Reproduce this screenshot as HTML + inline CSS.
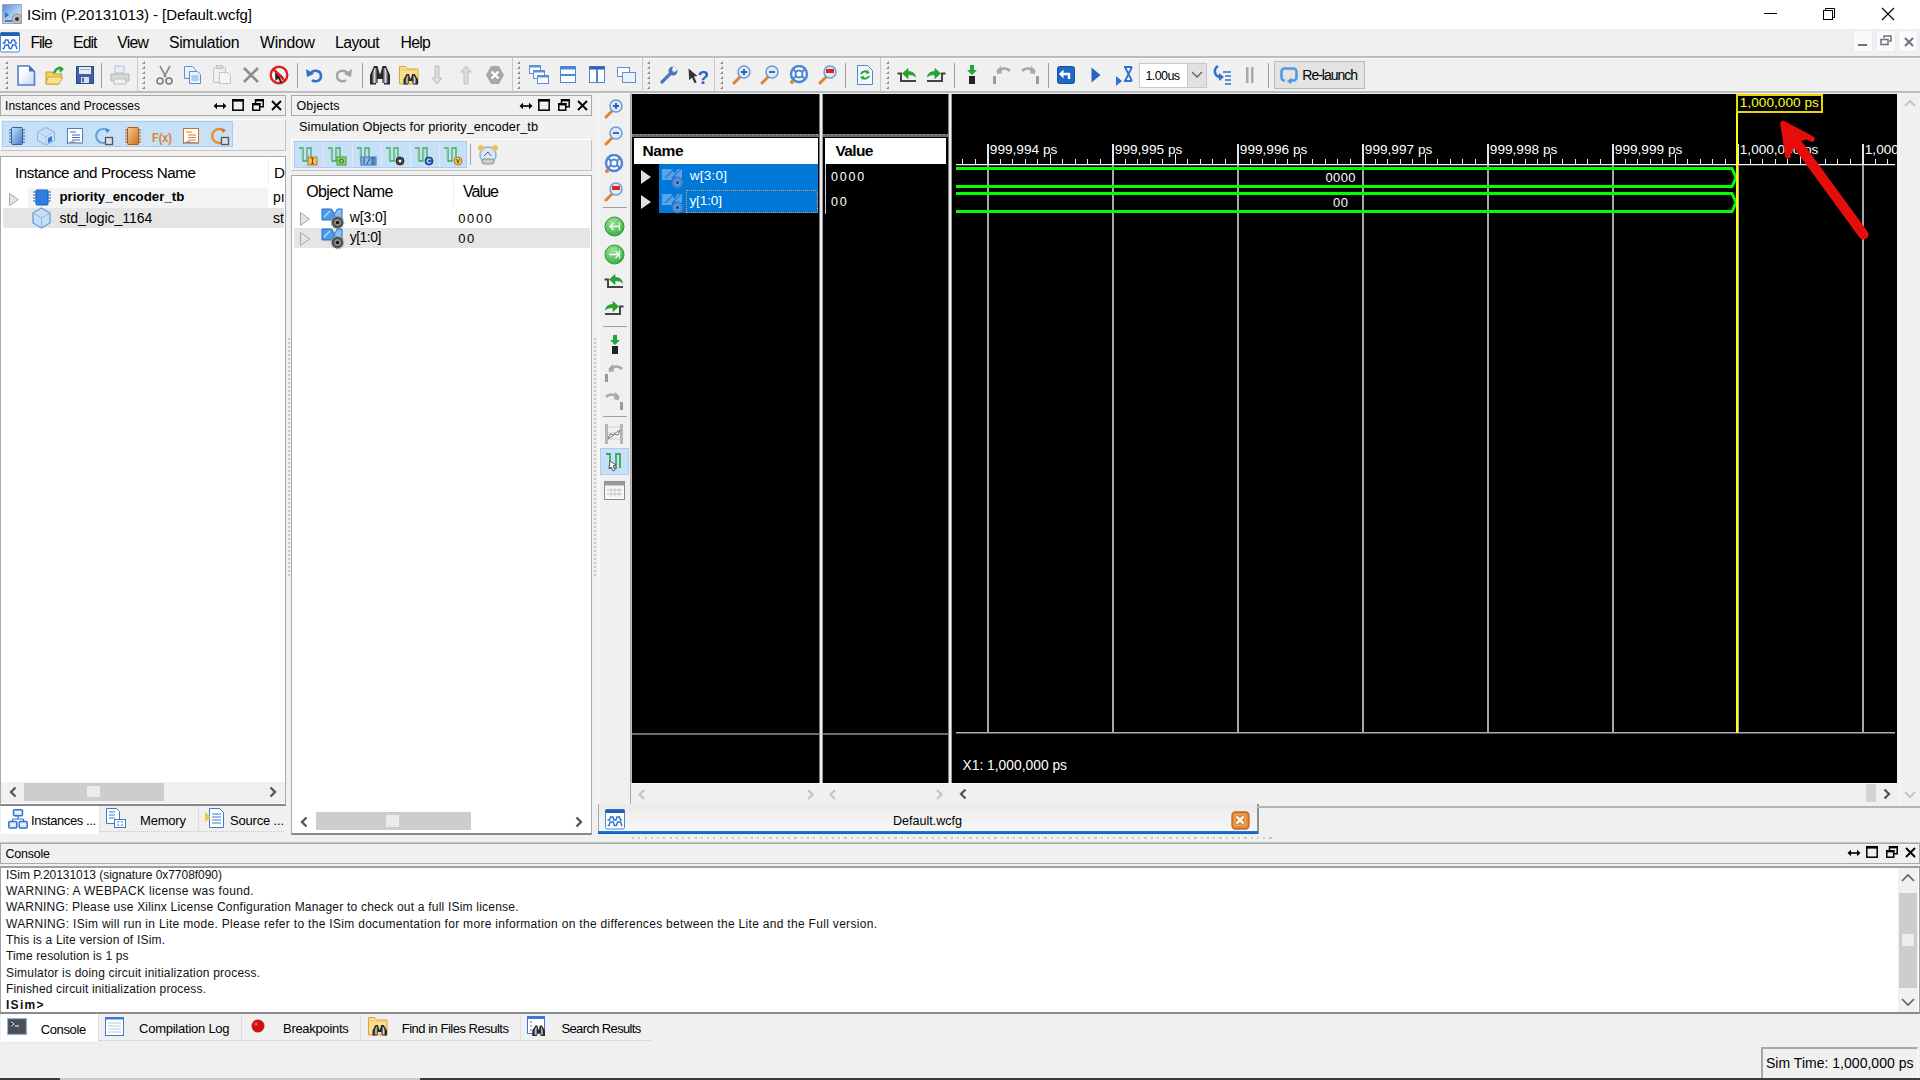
<!DOCTYPE html><html><head><meta charset="utf-8"><style>
*{margin:0;padding:0;box-sizing:border-box}
html,body{width:1920px;height:1080px;overflow:hidden;background:#f0f0f0}
body{position:relative;font-family:"Liberation Sans",sans-serif;color:#000}
.a{position:absolute}
.t{white-space:nowrap;line-height:1}
</style></head><body><div class="a" style="left:0px;top:0px;width:1920px;height:29px;background:#fff"></div>
<svg class="a" style="left:2px;top:4px;" width="20" height="20" viewBox="0 0 20 20"><defs><linearGradient id="tg" x1="0" y1="0" x2="1" y2="1"><stop offset="0" stop-color="#4f8ad6"/><stop offset=".6" stop-color="#b9d4f0"/><stop offset="1" stop-color="#e6eef6"/></linearGradient></defs><rect x="0.5" y="0.5" width="19" height="19" fill="url(#tg)" stroke="#9aa8b8"/><path d="M3 8l4 3-4 3z" fill="#2f6fd0"/><path d="M3 17h8" stroke="#2f5fb0" stroke-width="1.5"/><circle cx="15" cy="15" r="5" fill="#b8bcc2" stroke="#8a9098"/><circle cx="15" cy="15" r="2" fill="#333"/></svg>
<div class="a t" style="left:27px;top:7px;font-size:15px;color:#000;letter-spacing:-0.071px;">ISim (P.20131013) - [Default.wcfg]</div>
<div class="a" style="left:1764px;top:13px;width:13px;height:1px;background:#000"></div>
<svg class="a" style="left:1822px;top:7px;" width="15" height="14" viewBox="0 0 15 14"><rect x="1.5" y="3.5" width="9" height="9" fill="#fff" stroke="#000"/><path d="M3.5 3.5V1.5h9v9h-2" fill="none" stroke="#000"/></svg>
<svg class="a" style="left:1881px;top:7px;" width="15" height="15" viewBox="0 0 15 15"><path d="M1 1L13 13M13 1L1 13" stroke="#000" stroke-width="1.1"/></svg>
<div class="a" style="left:0px;top:29px;width:1920px;height:27px;background:#f0f0f0"></div>
<svg class="a" style="left:0px;top:32px;" width="21" height="21" viewBox="0 0 21 21"><rect x="0.5" y="0.5" width="19" height="19.5" rx="1.5" fill="#fff" stroke="#4f86d0"/><rect x="0.5" y="0.5" width="19" height="3.5" fill="#1f5fb8"/><path d="M2.5 11h2l1-3h2.5l1 3h2l1-3h2.5l1 3h1.5" fill="none" stroke="#2f6fd0" stroke-width="1.4"/><path d="M2.5 16.5h1.5l1.2-3.5h3l1.2 3.5h2l1.2-3.5h3l1.2 3.5h.7" fill="none" stroke="#2f6fd0" stroke-width="1.4"/></svg>
<div class="a t" style="left:30.5px;top:35.4px;font-size:15.8px;letter-spacing:-1.090px;">File</div>
<div class="a t" style="left:73px;top:35.4px;font-size:15.8px;letter-spacing:-0.911px;">Edit</div>
<div class="a t" style="left:117.3px;top:35.4px;font-size:15.8px;letter-spacing:-0.756px;">View</div>
<div class="a t" style="left:169px;top:35.4px;font-size:15.8px;letter-spacing:-0.352px;">Simulation</div>
<div class="a t" style="left:260px;top:35.4px;font-size:15.8px;letter-spacing:-0.237px;">Window</div>
<div class="a t" style="left:335px;top:35.4px;font-size:15.8px;letter-spacing:-0.547px;">Layout</div>
<div class="a t" style="left:400.5px;top:35.4px;font-size:15.8px;letter-spacing:-0.733px;">Help</div>
<div class="a" style="left:1853px;top:30px;width:20px;height:22px;background:#fafafa;border:1px solid #ececec"></div>
<div class="a" style="left:1876px;top:30px;width:20px;height:22px;background:#fafafa;border:1px solid #ececec"></div>
<div class="a" style="left:1898px;top:30px;width:20px;height:22px;background:#fafafa;border:1px solid #ececec"></div>
<div class="a" style="left:1858px;top:44px;width:9px;height:2px;background:#6b7280"></div>
<svg class="a" style="left:1880px;top:35px;" width="14" height="12" viewBox="0 0 14 12"><rect x="1" y="4.5" width="7" height="5" fill="none" stroke="#6b7280" stroke-width="1.5"/><path d="M4 3V1h7v5H9" fill="none" stroke="#6b7280" stroke-width="1.5"/></svg>
<svg class="a" style="left:1903px;top:36px;" width="12" height="12" viewBox="0 0 12 12"><path d="M2 2L10 10M10 2L2 10" stroke="#6b7280" stroke-width="2"/></svg>
<div class="a" style="left:0px;top:56px;width:1920px;height:2px;background:#bdbdbd"></div>
<div class="a" style="left:0px;top:58px;width:1920px;height:1px;background:#fbfbfb"></div>
<div class="a" style="left:0px;top:59px;width:1920px;height:33px;background:#f0f0f0"></div>
<div class="a" style="left:0px;top:91px;width:1920px;height:2px;background:#bdbdbd"></div>
<div class="a" style="left:137px;top:58px;width:1px;height:33px;background:#c8c8c8"></div>
<div class="a" style="left:512px;top:58px;width:1px;height:33px;background:#c8c8c8"></div>
<div class="a" style="left:642px;top:58px;width:1px;height:33px;background:#c8c8c8"></div>
<div class="a" style="left:714px;top:58px;width:1px;height:33px;background:#c8c8c8"></div>
<div class="a" style="left:880px;top:58px;width:1px;height:33px;background:#c8c8c8"></div>
<svg class="a" style="left:5px;top:61px;" width="4" height="30" viewBox="0 0 4 30"><path d="M0 0.5h1v1H0z" fill="#fff"/><path d="M3 0v3H0z" fill="#8c8c8c"/><path d="M0 5.5h1v1H0z" fill="#fff"/><path d="M3 5v3H0z" fill="#8c8c8c"/><path d="M0 10.5h1v1H0z" fill="#fff"/><path d="M3 10v3H0z" fill="#8c8c8c"/><path d="M0 15.5h1v1H0z" fill="#fff"/><path d="M3 15v3H0z" fill="#8c8c8c"/><path d="M0 20.5h1v1H0z" fill="#fff"/><path d="M3 20v3H0z" fill="#8c8c8c"/><path d="M0 25.5h1v1H0z" fill="#fff"/><path d="M3 25v3H0z" fill="#8c8c8c"/></svg>
<svg class="a" style="left:142px;top:61px;" width="4" height="30" viewBox="0 0 4 30"><path d="M0 0.5h1v1H0z" fill="#fff"/><path d="M3 0v3H0z" fill="#8c8c8c"/><path d="M0 5.5h1v1H0z" fill="#fff"/><path d="M3 5v3H0z" fill="#8c8c8c"/><path d="M0 10.5h1v1H0z" fill="#fff"/><path d="M3 10v3H0z" fill="#8c8c8c"/><path d="M0 15.5h1v1H0z" fill="#fff"/><path d="M3 15v3H0z" fill="#8c8c8c"/><path d="M0 20.5h1v1H0z" fill="#fff"/><path d="M3 20v3H0z" fill="#8c8c8c"/><path d="M0 25.5h1v1H0z" fill="#fff"/><path d="M3 25v3H0z" fill="#8c8c8c"/></svg>
<svg class="a" style="left:517px;top:61px;" width="4" height="30" viewBox="0 0 4 30"><path d="M0 0.5h1v1H0z" fill="#fff"/><path d="M3 0v3H0z" fill="#8c8c8c"/><path d="M0 5.5h1v1H0z" fill="#fff"/><path d="M3 5v3H0z" fill="#8c8c8c"/><path d="M0 10.5h1v1H0z" fill="#fff"/><path d="M3 10v3H0z" fill="#8c8c8c"/><path d="M0 15.5h1v1H0z" fill="#fff"/><path d="M3 15v3H0z" fill="#8c8c8c"/><path d="M0 20.5h1v1H0z" fill="#fff"/><path d="M3 20v3H0z" fill="#8c8c8c"/><path d="M0 25.5h1v1H0z" fill="#fff"/><path d="M3 25v3H0z" fill="#8c8c8c"/></svg>
<svg class="a" style="left:647px;top:61px;" width="4" height="30" viewBox="0 0 4 30"><path d="M0 0.5h1v1H0z" fill="#fff"/><path d="M3 0v3H0z" fill="#8c8c8c"/><path d="M0 5.5h1v1H0z" fill="#fff"/><path d="M3 5v3H0z" fill="#8c8c8c"/><path d="M0 10.5h1v1H0z" fill="#fff"/><path d="M3 10v3H0z" fill="#8c8c8c"/><path d="M0 15.5h1v1H0z" fill="#fff"/><path d="M3 15v3H0z" fill="#8c8c8c"/><path d="M0 20.5h1v1H0z" fill="#fff"/><path d="M3 20v3H0z" fill="#8c8c8c"/><path d="M0 25.5h1v1H0z" fill="#fff"/><path d="M3 25v3H0z" fill="#8c8c8c"/></svg>
<svg class="a" style="left:720px;top:61px;" width="4" height="30" viewBox="0 0 4 30"><path d="M0 0.5h1v1H0z" fill="#fff"/><path d="M3 0v3H0z" fill="#8c8c8c"/><path d="M0 5.5h1v1H0z" fill="#fff"/><path d="M3 5v3H0z" fill="#8c8c8c"/><path d="M0 10.5h1v1H0z" fill="#fff"/><path d="M3 10v3H0z" fill="#8c8c8c"/><path d="M0 15.5h1v1H0z" fill="#fff"/><path d="M3 15v3H0z" fill="#8c8c8c"/><path d="M0 20.5h1v1H0z" fill="#fff"/><path d="M3 20v3H0z" fill="#8c8c8c"/><path d="M0 25.5h1v1H0z" fill="#fff"/><path d="M3 25v3H0z" fill="#8c8c8c"/></svg>
<svg class="a" style="left:886px;top:61px;" width="4" height="30" viewBox="0 0 4 30"><path d="M0 0.5h1v1H0z" fill="#fff"/><path d="M3 0v3H0z" fill="#8c8c8c"/><path d="M0 5.5h1v1H0z" fill="#fff"/><path d="M3 5v3H0z" fill="#8c8c8c"/><path d="M0 10.5h1v1H0z" fill="#fff"/><path d="M3 10v3H0z" fill="#8c8c8c"/><path d="M0 15.5h1v1H0z" fill="#fff"/><path d="M3 15v3H0z" fill="#8c8c8c"/><path d="M0 20.5h1v1H0z" fill="#fff"/><path d="M3 20v3H0z" fill="#8c8c8c"/><path d="M0 25.5h1v1H0z" fill="#fff"/><path d="M3 25v3H0z" fill="#8c8c8c"/></svg>
<div class="a" style="left:101px;top:63px;width:1px;height:25px;background:#a0a0a0"></div>
<div class="a" style="left:297px;top:63px;width:1px;height:25px;background:#a0a0a0"></div>
<div class="a" style="left:362px;top:63px;width:1px;height:25px;background:#a0a0a0"></div>
<div class="a" style="left:845px;top:63px;width:1px;height:25px;background:#a0a0a0"></div>
<div class="a" style="left:954px;top:63px;width:1px;height:25px;background:#a0a0a0"></div>
<div class="a" style="left:1048px;top:63px;width:1px;height:25px;background:#a0a0a0"></div>
<div class="a" style="left:1268px;top:63px;width:1px;height:25px;background:#a0a0a0"></div>
<svg class="a" style="left:17px;top:65px;" width="20" height="21" viewBox="0 0 20 21"><defs><linearGradient id="gnew" x1="0" y1="0" x2="1" y2="1"><stop offset=".3" stop-color="#fff"/><stop offset="1" stop-color="#b9d6f2"/></linearGradient></defs><path d="M1 1h11l5.5 5.5V20H1z" fill="url(#gnew)" stroke="#4f7fc4" stroke-width="1.6"/><path d="M12 1v5.5h5.5z" fill="#3a6fc4"/></svg>
<svg class="a" style="left:45px;top:65px;" width="20" height="21" viewBox="0 0 20 21"><path d="M1 7h6l2 2h8l-3 10H1z" fill="#f3d25c" stroke="#c99a2e"/><path d="M3 12h15l-4 7H1z" fill="#fbe58b" stroke="#c99a2e" stroke-width=".8"/><path d="M9 8c2-5 6-6 8-4" fill="none" stroke="#22a63a" stroke-width="2.5"/><path d="M14 1l5 3-4 4z" fill="#22a63a"/></svg>
<svg class="a" style="left:75px;top:65px;" width="20" height="21" viewBox="0 0 20 21"><rect x="1.5" y="1.5" width="17" height="17" fill="#3f5fa6" stroke="#2c4a8a"/><rect x="4" y="2" width="12" height="7" fill="#e8edf5"/><rect x="5" y="4" width="10" height="1" fill="#9aa9c4"/><rect x="6" y="12" width="8" height="6" fill="#d7dee9"/><rect x="7" y="13" width="2" height="4" fill="#3f5fa6"/></svg>
<svg class="a" style="left:110px;top:65px;" width="20" height="21" viewBox="0 0 20 21"><rect x="5" y="1" width="9" height="7" fill="#e6eef8" stroke="#b7c2cf"/><path d="M1 9h18v7H1z" fill="#d8d8d8" stroke="#b5b5b5"/><rect x="4" y="14" width="12" height="5" fill="#f2f2f2" stroke="#bdbdbd"/></svg>
<svg class="a" style="left:155px;top:65px;" width="20" height="21" viewBox="0 0 20 21"><path d="M5 1l6 11M15 1L9 12" stroke="#8a8a8a" stroke-width="1.6" fill="none"/><circle cx="5" cy="16" r="3" fill="none" stroke="#7a7a7a" stroke-width="1.6"/><circle cx="14" cy="16" r="3" fill="none" stroke="#7a7a7a" stroke-width="1.6"/></svg>
<svg class="a" style="left:183px;top:65px;" width="20" height="21" viewBox="0 0 20 21"><path d="M1.5 1.5h8l3 3v9h-11z" fill="#eaf2fc" stroke="#5b8fd8"/><path d="M6.5 6.5h8l3 3v9h-11z" fill="#eaf2fc" stroke="#5b8fd8"/><path d="M8.5 11h7M8.5 13h7M8.5 15h7" stroke="#7aa6e0"/></svg>
<svg class="a" style="left:212px;top:65px;" width="20" height="21" viewBox="0 0 20 21"><rect x="1.5" y="2.5" width="12" height="15" rx="1" fill="#efefef" stroke="#c4c4c4"/><rect x="4.5" y="0.5" width="6" height="3" fill="#ddd" stroke="#c4c4c4"/><path d="M7.5 7.5h8l3 3v8h-11z" fill="#f5f5f5" stroke="#c4c4c4"/></svg>
<svg class="a" style="left:241px;top:65px;" width="20" height="21" viewBox="0 0 20 21"><path d="M3 3L17 17M17 3L3 17" stroke="#8c8c8c" stroke-width="2.6"/></svg>
<svg class="a" style="left:269px;top:65px;" width="20" height="21" viewBox="0 0 20 21"><circle cx="10" cy="10" r="8.3" fill="#f4f4f4" stroke="#e0201b" stroke-width="2.4"/><path d="M6 4.5L15 12.5L11 12.8L13 17L11.2 17.8L9.2 13.6L6.5 16Z" fill="#1a1a1a"/><path d="M4.2 4.2L15.8 15.8" stroke="#e0201b" stroke-width="2.4"/></svg>
<svg class="a" style="left:305px;top:65px;" width="20" height="21" viewBox="0 0 20 21"><path d="M5 9c3-5 11-4 11 2s-7 6-9 4" fill="none" stroke="#2c74d0" stroke-width="2.6"/><path d="M1 4l1 8 7-3z" fill="#2c74d0"/></svg>
<svg class="a" style="left:333px;top:65px;" width="20" height="21" viewBox="0 0 20 21"><path d="M15 9c-3-5-11-4-11 2s7 6 9 4" fill="none" stroke="#a3a3a3" stroke-width="2.4" transform="translate(0,0)"/><path d="M19 4l-1 8-7-3z" fill="#a3a3a3"/></svg>
<svg class="a" style="left:370px;top:65px;" width="20" height="21" viewBox="0 0 20 21"><defs><linearGradient id="gbn" x1="0" y1="0" x2="1" y2="0"><stop offset="0" stop-color="#1e1e1e"/><stop offset=".5" stop-color="#d8d8d8"/><stop offset="1" stop-color="#1e1e1e"/></linearGradient></defs><path d="M4 1H7.5L9.5 8.5H10.5L12.5 1H16L20 10V19.5H14V14H6V19.5H0V10Z" fill="#2a2a2a"/><path d="M1.5 10.5L4.5 3H6.5L7.5 10.5V18H1.5Z" fill="url(#gbn)"/><path d="M12.5 10.5L13.5 3H15.5L18.5 10.5V18H12.5Z" fill="url(#gbn)"/></svg>
<svg class="a" style="left:399px;top:65px;" width="20" height="21" viewBox="0 0 20 21"><path d="M0.5 1.5h6l2 2.5h10.5v15H0.5z" fill="#f8e08a" stroke="#e0a040"/><path d="M2 5h15" stroke="#f0c060"/><path d="M7.5 9H10L11.2 13.5H12L13.2 9H15.7L19 14.5V19.5H14.2V16H9V19.5H4.5V14.5Z" fill="#2a2a2a"/><path d="M6 15L8.4 10.5H9.5L10 18.5H6Z" fill="url(#gbn)"/><path d="M13.5 10.5H14.8L17.7 15V18.5H13.4Z" fill="url(#gbn)"/></svg>
<svg class="a" style="left:431px;top:65px;" width="20" height="21" viewBox="0 0 20 21"><path d="M4 1v12H1l5 6 5-6H8V1z" fill="#dcdcdc" stroke="#bdbdbd"/></svg>
<svg class="a" style="left:460px;top:65px;" width="20" height="21" viewBox="0 0 20 21"><path d="M4 19V7H1l5-6 5 6H8v12z" fill="#dcdcdc" stroke="#bdbdbd"/></svg>
<svg class="a" style="left:485px;top:65px;" width="20" height="21" viewBox="0 0 20 21"><path d="M6 1h8l5 9-5 9H6l-5-9z" fill="#a8a8a8"/><path d="M6.5 6.5l7 7M13.5 6.5l-7 7" stroke="#fff" stroke-width="2.4"/></svg>
<svg class="a" style="left:529px;top:65px;" width="20" height="21" viewBox="0 0 20 21"><rect x="0.5" y="0.5" width="11" height="8" fill="#fff" stroke="#5b8fd8"/><rect x="0.5" y="0.5" width="11" height="2" fill="#5b8fd8"/><rect x="4.5" y="5.5" width="11" height="8" fill="#fff" stroke="#5b8fd8"/><rect x="4.5" y="5.5" width="11" height="2" fill="#5b8fd8"/><rect x="8.5" y="10.5" width="11" height="8" fill="#fff" stroke="#5b8fd8"/><rect x="8.5" y="10.5" width="11" height="2" fill="#5b8fd8"/></svg>
<svg class="a" style="left:560px;top:65px;" width="20" height="21" viewBox="0 0 20 21"><rect x="0.5" y="1.5" width="15" height="16" fill="#fff" stroke="#4f86d4"/><rect x="0.5" y="1.5" width="15" height="3" fill="#4f86d4"/><rect x="0.5" y="9" width="15" height="2" fill="#4f86d4"/></svg>
<svg class="a" style="left:589px;top:65px;" width="20" height="21" viewBox="0 0 20 21"><rect x="0.5" y="1.5" width="15" height="16" fill="#fff" stroke="#4f86d4"/><rect x="0.5" y="1.5" width="15" height="3" fill="#2f5fb0"/><rect x="7" y="4" width="2" height="13" fill="#4f86d4"/></svg>
<svg class="a" style="left:617px;top:65px;" width="20" height="21" viewBox="0 0 20 21"><rect x="0.5" y="2.5" width="12" height="9" fill="#fff" stroke="#5b8fd8"/><rect x="5.5" y="7.5" width="13" height="10" fill="#eaf2fc" stroke="#5b8fd8"/></svg>
<svg class="a" style="left:660px;top:65px;" width="20" height="21" viewBox="0 0 20 21"><path d="M2 17l9-9" stroke="#4b78b8" stroke-width="3.2" stroke-linecap="round"/><circle cx="13" cy="6" r="4.5" fill="#4b78b8"/><path d="M13 1l5 3-3 3-3-1z" fill="#f0f0f0"/></svg>
<svg class="a" style="left:688px;top:65px;" width="20" height="21" viewBox="0 0 20 21"><path d="M0.5 1.5L9.5 9L6 9.6L8.6 15.2L6.6 16.2L4 10.6L1.2 13.2Z" fill="#333" transform="translate(0,2)"/><text x="9.5" y="18.5" font-family="Liberation Sans" font-weight="bold" font-size="19" fill="#2466c4">?</text></svg>
<svg class="a" style="left:732px;top:65px;" width="20" height="21" viewBox="0 0 20 21"><path d="M2 18l6-6" stroke="#e0822e" stroke-width="3" stroke-linecap="round"/><circle cx="12" cy="7" r="6" fill="#dceaf8" stroke="#6a9bd6" stroke-width="1.5"/><path d="M9 7h6M12 4v6" stroke="#2c5fb0" stroke-width="1.8"/></svg>
<svg class="a" style="left:760px;top:65px;" width="20" height="21" viewBox="0 0 20 21"><path d="M2 18l6-6" stroke="#e0822e" stroke-width="3" stroke-linecap="round"/><circle cx="12" cy="7" r="6" fill="#dceaf8" stroke="#6a9bd6" stroke-width="1.5"/><path d="M9 7h6" stroke="#2c5fb0" stroke-width="1.8"/></svg>
<svg class="a" style="left:789px;top:65px;" width="20" height="21" viewBox="0 0 20 21"><circle cx="10" cy="9" r="8" fill="#fff" stroke="#4f86d4" stroke-width="2.5"/><circle cx="10" cy="9" r="3.5" fill="#fff" stroke="#4f86d4" stroke-width="2"/><path d="M4 4l3 3M16 4l-3 3M4 14l3-3M16 14l-3-3" stroke="#4f86d4" stroke-width="2"/><circle cx="3" cy="17" r="2" fill="#e0822e"/></svg>
<svg class="a" style="left:818px;top:65px;" width="20" height="21" viewBox="0 0 20 21"><path d="M2 18l6-6" stroke="#e0822e" stroke-width="3" stroke-linecap="round"/><circle cx="12" cy="7" r="6" fill="#dceaf8" stroke="#6a9bd6" stroke-width="1.5"/><rect x="8" y="4" width="8" height="4" fill="#e0201b"/></svg>
<svg class="a" style="left:855px;top:65px;" width="20" height="21" viewBox="0 0 20 21"><path d="M2.5 0.5h10l5 5v14h-15z" fill="#f4f8fd" stroke="#4f86d4"/><path d="M6 9a4 4 0 0 1 7-1M14 11a4 4 0 0 1-7 1" fill="none" stroke="#22a63a" stroke-width="2"/><path d="M12 5l3 3-4 1zM8 15l-3-3 4-1z" fill="#22a63a"/></svg>
<svg class="a" style="left:897px;top:66px;" width="20" height="21" viewBox="0 0 20 21"><path d="M0.5 7.5H4V15H19" fill="none" stroke="#444" stroke-width="2"/><path d="M5.5 7.5L11 2.5V5.5C15 5.5 18 7 18.5 11C17 9 15 8.8 11 8.8V12.5Z" fill="#1fa82a" stroke="#178a20" stroke-width=".6"/></svg>
<svg class="a" style="left:926px;top:66px;" width="20" height="21" viewBox="0 0 20 21"><path d="M19.5 7.5H16V15H1" fill="none" stroke="#444" stroke-width="2"/><path d="M14.5 7.5L9 2.5V5.5C5 5.5 2 7 1.5 11C3 9 5 8.8 9 8.8V12.5Z" fill="#1fa82a" stroke="#178a20" stroke-width=".6"/></svg>
<svg class="a" style="left:966px;top:64px;" width="20" height="21" viewBox="0 0 20 21"><path d="M4 1h4v5h3l-5 5-5-5h3z" fill="#22a63a"/><rect x="3" y="12" width="6" height="8" fill="#222"/></svg>
<svg class="a" style="left:992px;top:64px;" width="20" height="21" viewBox="0 0 20 21"><rect x="1" y="12" width="3" height="8" fill="#9a9a9a"/><path d="M6 10c1-6 8-7 12-3" fill="none" stroke="#a8a8a8" stroke-width="2.5"/><path d="M9 2L4 7l6 3z" fill="#a8a8a8"/></svg>
<svg class="a" style="left:1020px;top:64px;" width="20" height="21" viewBox="0 0 20 21"><rect x="16" y="12" width="3" height="8" fill="#9a9a9a"/><path d="M14 10c-1-6-8-7-12-3" fill="none" stroke="#a8a8a8" stroke-width="2.5"/><path d="M11 2l5 5-6 3z" fill="#a8a8a8"/></svg>
<svg class="a" style="left:1057px;top:66px;" width="20" height="21" viewBox="0 0 20 21"><rect x="0.5" y="0.5" width="17" height="17" rx="2" fill="#1f68c8" stroke="#17509a"/><path d="M6 8h6v5" fill="none" stroke="#fff" stroke-width="2.4"/><path d="M2 8l4.5-4.5v9z" fill="#fff"/></svg>
<svg class="a" style="left:1091px;top:66px;" width="20" height="21" viewBox="0 0 20 21"><path d="M0.5 1.5L9.5 9L0.5 16.5z" fill="#2466c4"/></svg>
<svg class="a" style="left:1115px;top:66px;" width="20" height="21" viewBox="0 0 20 21"><path d="M1 10l6 5-6 5z" fill="#2c74d0"/><path d="M9 1h8M9 15h8M10 1l7 14M17 1l-7 14" stroke="#2c74d0" stroke-width="1.8"/></svg>
<svg class="a" style="left:1212px;top:65px;" width="20" height="21" viewBox="0 0 20 21"><path d="M6 1C1 4 2 12 9 12" fill="none" stroke="#2c74d0" stroke-width="2.5"/><path d="M7 8l5 4-5 4z" fill="#2c74d0"/><path d="M11 7h8M13 11h6M13 15h6M13 19h6" stroke="#2c74d0" stroke-width="1.5"/></svg>
<svg class="a" style="left:1245px;top:64px;" width="20" height="21" viewBox="0 0 20 21"><rect x="1" y="3" width="2.5" height="16" fill="#a8a8a8"/><rect x="6" y="3" width="2.5" height="16" fill="#a8a8a8"/></svg>
<div class="a" style="left:1139px;top:63px;width:68px;height:25px;background:#fff;border:1px solid #c8c8c8"></div>
<div class="a" style="left:1187px;top:64px;width:19px;height:23px;background:#e1e1e1;border-left:1px solid #c8c8c8"></div>
<svg class="a" style="left:1191px;top:71px;" width="12" height="8" viewBox="0 0 12 8"><path d="M1 1l5 5 5-5" fill="none" stroke="#606060" stroke-width="1.3"/></svg>
<div class="a t" style="left:1145.5px;top:70px;font-size:12.5px;letter-spacing:-0.606px;">1.00us</div>
<div class="a" style="left:1274px;top:61px;width:91px;height:28px;background:#e3e3e3;border:1px solid #b8b8b8"></div>
<svg class="a" style="left:1280px;top:67px;" width="19" height="18" viewBox="0 0 19 18"><path d="M5 13.5H4.5a3 3 0 0 1-3-3V4.5a3 3 0 0 1 3-3h9a3 3 0 0 1 3 3v6a3 3 0 0 1-3 3H10" fill="none" stroke="#4f9ae6" stroke-width="2.6"/><path d="M12 10.5l-5 3.5 4 3.5z" fill="#4f9ae6"/></svg>
<div class="a t" style="left:1302.3px;top:68px;font-size:14px;letter-spacing:-1.016px;">Re-launch</div>
<div class="a" style="left:0px;top:95px;width:286px;height:21px;border:1px solid #a9a9a9;background:#f0f0f0"></div>
<div class="a t" style="left:5px;top:100px;font-size:12px;letter-spacing:0.042px;">Instances and Processes</div>
<svg class="a" style="left:213px;top:101.5px;" width="14" height="8" viewBox="0 0 14 8"><path d="M3 4h8" stroke="#000" stroke-width="1.6"/><path d="M0.5 4L4 0.8v6.4zM13.5 4L10 0.8v6.4z" fill="#000"/></svg>
<svg class="a" style="left:232px;top:99px;" width="12" height="12" viewBox="0 0 12 12"><rect x="0.8" y="0.8" width="10.4" height="10.4" fill="none" stroke="#000" stroke-width="1.5"/><rect x="0" y="0" width="12" height="2.6" fill="#000"/></svg>
<svg class="a" style="left:252px;top:99px;" width="12" height="12" viewBox="0 0 12 12"><rect x="0.8" y="4.8" width="6.9" height="6.4" fill="none" stroke="#000" stroke-width="1.5"/><rect x="0" y="4" width="8.5" height="2.4" fill="#000"/><path d="M3.5 4V0.8h7.7v6.9H8" fill="none" stroke="#000" stroke-width="1.5"/><rect x="3" y="0" width="9" height="2.4" fill="#000"/></svg>
<svg class="a" style="left:271px;top:100px;" width="11" height="11" viewBox="0 0 11 11"><path d="M1 1L10 10M10 1L1 10" stroke="#000" stroke-width="1.9"/></svg>
<div class="a" style="left:0px;top:119px;width:286px;height:32px;border:1px solid #c4c4c4;border-top-color:#fff;border-left-color:#fff;background:#f0f0f0"></div>
<div class="a" style="left:2px;top:121px;width:231px;height:26px;background:#c6e0f7;border:1px solid #a8cdef"></div>
<div class="a" style="left:30px;top:122px;width:1px;height:24px;background:repeating-linear-gradient(#e4f0fa 0 1px,#b0d4f2 1px 2px)"></div>
<div class="a" style="left:59px;top:122px;width:1px;height:24px;background:repeating-linear-gradient(#e4f0fa 0 1px,#b0d4f2 1px 2px)"></div>
<div class="a" style="left:88px;top:122px;width:1px;height:24px;background:repeating-linear-gradient(#e4f0fa 0 1px,#b0d4f2 1px 2px)"></div>
<div class="a" style="left:117px;top:122px;width:1px;height:24px;background:repeating-linear-gradient(#e4f0fa 0 1px,#b0d4f2 1px 2px)"></div>
<div class="a" style="left:146px;top:122px;width:1px;height:24px;background:repeating-linear-gradient(#e4f0fa 0 1px,#b0d4f2 1px 2px)"></div>
<div class="a" style="left:175px;top:122px;width:1px;height:24px;background:repeating-linear-gradient(#e4f0fa 0 1px,#b0d4f2 1px 2px)"></div>
<div class="a" style="left:204px;top:122px;width:1px;height:24px;background:repeating-linear-gradient(#e4f0fa 0 1px,#b0d4f2 1px 2px)"></div>
<svg class="a" style="left:7px;top:126px;" width="20" height="20" viewBox="0 0 20 20"><defs><linearGradient id="gbc1" x1="0" y1="0" x2="1" y2="1"><stop offset="0" stop-color="#c9def5"/><stop offset="1" stop-color="#3f7ccc"/></linearGradient></defs><rect x="4.5" y="1.5" width="11" height="17" rx="1" fill="url(#gbc1)" stroke="#35609a"/><path d="M2 4h2.5M2 7h2.5M2 10h2.5M2 13h2.5M2 16h2.5M15.5 4H18M15.5 7H18M15.5 10H18M15.5 13H18M15.5 16H18" stroke="#35609a" stroke-width="1.2"/></svg>
<svg class="a" style="left:36px;top:126px;" width="20" height="20" viewBox="0 0 20 20"><defs><linearGradient id="gbc2" x1="0" y1="0" x2="1" y2="1"><stop offset="0" stop-color="#f2f8fe"/><stop offset="1" stop-color="#7fb0e6"/></linearGradient></defs><path d="M10 1.5l8.5 4.5v8.5L10 19l-8.5-4.5V6z" fill="url(#gc2)" stroke="#8ab0d8"/><path d="M1.5 6L10 10.5 18.5 6M10 10.5V19" fill="none" stroke="#a8c8ea"/><path d="M12 12l4-2v5l-4 2z" fill="#3f7ccc"/></svg>
<svg class="a" style="left:65px;top:126px;" width="20" height="20" viewBox="0 0 20 20"><rect x="2.5" y="2.5" width="15" height="15" fill="#fff" stroke="#4f7fc0"/><rect x="3" y="16" width="15" height="2" fill="#9ab"/><path d="M5 6h6M7 9h8M7 11.5h8M7 14h8" stroke="#3b6fc0" stroke-width="1.2"/><path d="M5 16h5" stroke="#777"/></svg>
<svg class="a" style="left:94px;top:126px;" width="20" height="20" viewBox="0 0 20 20"><path d="M13.5 4.5a7 7 0 1 0 0 11" fill="none" stroke="#6aa0dc" stroke-width="2.2"/><path d="M11 2l5 2-3 3z" fill="#3f7ccc"/><rect x="11.5" y="11.5" width="7" height="7" fill="#e0e0e0" stroke="#555" stroke-width="1.3"/></svg>
<svg class="a" style="left:123px;top:126px;" width="20" height="20" viewBox="0 0 20 20"><defs><linearGradient id="gbc3" x1="0" y1="0" x2="1" y2="1"><stop offset="0" stop-color="#f6c892"/><stop offset="1" stop-color="#d0701c"/></linearGradient></defs><rect x="4.5" y="1.5" width="11" height="17" rx="1" fill="url(#gbc3)" stroke="#a85a1a"/><path d="M2 4h2.5M2 7h2.5M2 10h2.5M2 13h2.5M2 16h2.5M15.5 4H18M15.5 7H18M15.5 10H18M15.5 13H18M15.5 16H18" stroke="#a85a1a" stroke-width="1.2"/></svg>
<svg class="a" style="left:152px;top:126px;" width="20" height="20" viewBox="0 0 20 20"><text x="0" y="15.5" font-family="Liberation Sans" font-weight="bold" font-size="12.5" fill="#e0802a" textLength="20" lengthAdjust="spacingAndGlyphs">F(x)</text></svg>
<svg class="a" style="left:181px;top:126px;" width="20" height="20" viewBox="0 0 20 20"><rect x="2.5" y="2.5" width="15" height="15" fill="#fff" stroke="#d0701c"/><rect x="3" y="16" width="15" height="2" fill="#b98"/><path d="M5 6h6M7 9h8M7 11.5h8M7 14h8" stroke="#e0802a" stroke-width="1.2"/><path d="M5 16h5" stroke="#777"/></svg>
<svg class="a" style="left:210px;top:126px;" width="20" height="20" viewBox="0 0 20 20"><path d="M13.5 4.5a7 7 0 1 0 0 11" fill="none" stroke="#e8902e" stroke-width="2.4"/><path d="M11 2l5 2-3 3z" fill="#d0701c"/><rect x="11.5" y="11.5" width="7" height="7" fill="#e0e0e0" stroke="#555" stroke-width="1.3"/></svg>
<div class="a" style="left:0px;top:156px;width:286px;height:650px;border:1px solid #a9a9a9;border-bottom:2px solid #888;background:#fff"></div>
<div class="a t" style="left:15px;top:165px;font-size:15.2px;letter-spacing:-0.408px;">Instance and Process Name</div>
<div class="a" style="left:268px;top:158px;width:1px;height:26px;background:#f0f0f0"></div>
<div class="a t" style="left:274px;top:165px;font-size:15.2px;">D</div>
<div class="a" style="left:28px;top:188px;width:240px;height:20px;background:#f3f3f3"></div>
<div class="a" style="left:3px;top:208px;width:281px;height:20px;background:#e5e5e5"></div>
<svg class="a" style="left:8px;top:192px;" width="12" height="14" viewBox="0 0 12 14"><path d="M1.5 1.5l9 6-9 6z" fill="#e4e4e4" stroke="#a8a8a8"/></svg>
<svg class="a" style="left:32px;top:188px;" width="20" height="19" viewBox="0 0 20 19"><rect x="4" y="2" width="12" height="15" rx="1" fill="#2f7fe0" stroke="#1b5fb8"/><path d="M1 4h3M1 7h3M1 10h3M1 13h3M16 4h3M16 7h3M16 10h3M16 13h3" stroke="#1b5fb8"/></svg>
<div class="a t" style="left:59.4px;top:190px;font-size:13.3px;font-weight:bold;letter-spacing:0.007px;">priority_encoder_tb</div>
<div class="a t" style="left:273px;top:190px;font-size:14px;">pı</div>
<svg class="a" style="left:31px;top:207px;" width="21" height="22" viewBox="0 0 21 22"><path d="M10.5 1l8.5 5v10l-8.5 5-8.5-5V6z" fill="#c7dff6" stroke="#6a9bd6" stroke-width="1.3"/><path d="M2 6l8.5 5 8.5-5M10.5 11v10" fill="none" stroke="#8bb5e3"/></svg>
<div class="a t" style="left:59.4px;top:211px;font-size:14px;letter-spacing:-0.012px;">std_logic_1164</div>
<div class="a t" style="left:273px;top:211px;font-size:14px;">st</div>
<div class="a" style="left:1px;top:782px;width:284px;height:21px;background:#f0f0f0"></div>
<svg class="a" style="left:8px;top:786px;" width="10" height="12" viewBox="0 0 10 12"><path d="M7.5 1.5L3 6l4.5 4.5" fill="none" stroke="#555" stroke-width="2.3"/></svg>
<svg class="a" style="left:268px;top:786px;" width="10" height="12" viewBox="0 0 10 12"><path d="M2.5 1.5L7 6l-4.5 4.5" fill="none" stroke="#555" stroke-width="2.3"/></svg>
<div class="a" style="left:24px;top:783px;width:140px;height:18px;background:#cdcdcd"></div>
<div class="a" style="left:87px;top:786px;width:13px;height:11px;background:#ececec"></div>
<div class="a" style="left:0px;top:806px;width:287px;height:28px;background:#f0f0f0"></div>
<div class="a" style="left:1px;top:806px;width:99px;height:28px;background:#fff;border-right:1px solid #e0e0e0"></div>
<div class="a" style="left:100px;top:831px;width:184px;height:1px;border-top:1px dotted #c8c8c8"></div>
<div class="a" style="left:198px;top:806px;width:1px;height:25px;background:#dedede"></div>
<svg class="a" style="left:8px;top:809px;" width="20" height="20" viewBox="0 0 20 20"><rect x="5.5" y="0.8" width="9" height="6" rx="1" fill="#dbe9f8" stroke="#2f72d0" stroke-width="1.5"/><path d="M10 7v3M4.5 10h11M4.5 10v2.5M15.5 10v2.5" stroke="#2f72d0" stroke-width="1.2"/><rect x="0.8" y="12.5" width="8" height="6.5" rx="1" fill="#dbe9f8" stroke="#2f72d0" stroke-width="1.5"/><rect x="11.2" y="12.5" width="8" height="6.5" rx="1" fill="#dbe9f8" stroke="#2f72d0" stroke-width="1.5"/><path d="M3 15.5h4M13.5 15.5h4M7.5 3.5h5" stroke="#fff" stroke-width="1.2"/></svg>
<div class="a t" style="left:31px;top:814px;font-size:13px;letter-spacing:-0.424px;">Instances ...</div>
<svg class="a" style="left:106px;top:808px;" width="21" height="21" viewBox="0 0 21 21"><path d="M0.5 0.5h10l3 3v12h-13z" fill="#fff" stroke="#3b7bd0"/><path d="M3 4h6M3 7h6M3 10h6" stroke="#3b7bd0"/><rect x="8.5" y="11.5" width="11" height="8" fill="#fff" stroke="#3b7bd0"/><path d="M11 14h2M15 14h2M11 17h2M15 17h2" stroke="#3b7bd0"/></svg>
<div class="a t" style="left:140px;top:814px;font-size:13px;letter-spacing:-0.191px;">Memory</div>
<svg class="a" style="left:205px;top:808px;" width="21" height="21" viewBox="0 0 21 21"><path d="M4.5 0.5h10l4 4v15h-14z" fill="#fff" stroke="#3b7bd0"/><path d="M7 6h9M7 9h9M7 12h9M7 15h9" stroke="#3b7bd0"/><path d="M0 4l6 5-6 5z" fill="#e8c42a" opacity=".85"/></svg>
<div class="a t" style="left:230px;top:814px;font-size:13px;letter-spacing:-0.182px;">Source ...</div>
<div class="a" style="left:291px;top:95px;width:301px;height:21px;border:1px solid #a9a9a9;background:#f0f0f0"></div>
<div class="a t" style="left:296.5px;top:100px;font-size:12.5px;letter-spacing:0.102px;">Objects</div>
<svg class="a" style="left:519px;top:101.5px;" width="14" height="8" viewBox="0 0 14 8"><path d="M3 4h8" stroke="#000" stroke-width="1.6"/><path d="M0.5 4L4 0.8v6.4zM13.5 4L10 0.8v6.4z" fill="#000"/></svg>
<svg class="a" style="left:538px;top:99px;" width="12" height="12" viewBox="0 0 12 12"><rect x="0.8" y="0.8" width="10.4" height="10.4" fill="none" stroke="#000" stroke-width="1.5"/><rect x="0" y="0" width="12" height="2.6" fill="#000"/></svg>
<svg class="a" style="left:558px;top:99px;" width="12" height="12" viewBox="0 0 12 12"><rect x="0.8" y="4.8" width="6.9" height="6.4" fill="none" stroke="#000" stroke-width="1.5"/><rect x="0" y="4" width="8.5" height="2.4" fill="#000"/><path d="M3.5 4V0.8h7.7v6.9H8" fill="none" stroke="#000" stroke-width="1.5"/><rect x="3" y="0" width="9" height="2.4" fill="#000"/></svg>
<svg class="a" style="left:577px;top:100px;" width="11" height="11" viewBox="0 0 11 11"><path d="M1 1L10 10M10 1L1 10" stroke="#000" stroke-width="1.9"/></svg>
<div class="a t" style="left:299px;top:121px;font-size:12.8px;letter-spacing:0.018px;">Simulation Objects for priority_encoder_tb</div>
<div class="a" style="left:291px;top:139px;width:301px;height:32px;border:1px solid #c4c4c4;border-top-color:#fff;border-left-color:#fff;background:#f0f0f0"></div>
<div class="a" style="left:294px;top:141px;width:173px;height:27px;background:#c6e0f7;border:1px solid #a8cdef"></div>
<div class="a" style="left:323px;top:142px;width:1px;height:25px;background:#dcebf8"></div>
<div class="a" style="left:352px;top:142px;width:1px;height:25px;background:#dcebf8"></div>
<div class="a" style="left:381px;top:142px;width:1px;height:25px;background:#dcebf8"></div>
<div class="a" style="left:410px;top:142px;width:1px;height:25px;background:#dcebf8"></div>
<div class="a" style="left:439px;top:142px;width:1px;height:25px;background:#dcebf8"></div>
<div class="a" style="left:470px;top:144px;width:1px;height:21px;background:#a0a0a0"></div>
<svg class="a" style="left:298px;top:145px;" width="21" height="21" viewBox="0 0 21 21"><path d="M1 3h4v13h4V3h4v13" fill="none" stroke="#3aa85a" stroke-width="1.3"/><path d="M4 3v12M10 3v12" stroke="#9bd1a8"/><rect x="10" y="12" width="9" height="8" fill="#f3c05c" stroke="#b07b1c"/><path d="M14.5 13.5v5M13 13.5h3M13 18.5h3" stroke="#7a4a0a"/></svg>
<svg class="a" style="left:327px;top:145px;" width="21" height="21" viewBox="0 0 21 21"><path d="M1 3h4v13h4V3h4v13" fill="none" stroke="#3aa85a" stroke-width="1.3"/><path d="M4 3v12M10 3v12" stroke="#9bd1a8"/><rect x="10" y="12" width="9" height="8" fill="#8fd36a" stroke="#4a9a2c"/><circle cx="14.5" cy="16" r="2" fill="none" stroke="#2a6a1a"/></svg>
<svg class="a" style="left:356px;top:145px;" width="21" height="21" viewBox="0 0 21 21"><path d="M1 3h4v13h4V3h4v13" fill="none" stroke="#3aa85a" stroke-width="1.3"/><path d="M4 3v12M10 3v12" stroke="#9bd1a8"/><rect x="5" y="12" width="15" height="8" fill="#8db9ea" stroke="#3b6fb8"/><path d="M8 13v6M11 19l3-6M16 13v6h2v-6z" stroke="#1f4a90" fill="none"/></svg>
<svg class="a" style="left:385px;top:145px;" width="21" height="21" viewBox="0 0 21 21"><path d="M1 3h4v13h4V3h4v13" fill="none" stroke="#3aa85a" stroke-width="1.3"/><path d="M4 3v12M10 3v12" stroke="#9bd1a8"/><circle cx="15" cy="16" r="4" fill="#4a4a4a" stroke="#222"/><circle cx="15" cy="16" r="1.3" fill="#fff"/></svg>
<svg class="a" style="left:414px;top:145px;" width="21" height="21" viewBox="0 0 21 21"><path d="M1 3h4v13h4V3h4v13" fill="none" stroke="#3aa85a" stroke-width="1.3"/><path d="M4 3v12M10 3v12" stroke="#9bd1a8"/><circle cx="15" cy="16" r="4" fill="#2f5fb0" stroke="#1b3f80"/><path d="M16.5 14.5a2 2 0 1 0 0 3" fill="none" stroke="#fff"/></svg>
<svg class="a" style="left:443px;top:145px;" width="21" height="21" viewBox="0 0 21 21"><path d="M1 3h4v13h4V3h4v13" fill="none" stroke="#3aa85a" stroke-width="1.3"/><path d="M4 3v12M10 3v12" stroke="#9bd1a8"/><circle cx="15" cy="16" r="4" fill="#f3c05c" stroke="#b07b1c"/><path d="M13.5 14l1.5 4 1.5-4" fill="none" stroke="#7a4a0a"/></svg>
<svg class="a" style="left:477px;top:144px;" width="22" height="22" viewBox="0 0 22 22"><circle cx="11" cy="11" r="8" fill="#dbe9f7" stroke="#8ab3e0" stroke-width="1.5"/><circle cx="4" cy="4" r="3" fill="#f3c05c"/><circle cx="18" cy="4" r="3" fill="#f3c05c"/><path d="M7 12l4-4 3 4" fill="none" stroke="#666"/><rect x="5" y="15" width="12" height="5" rx="2" fill="#ccc" stroke="#888"/></svg>
<div class="a" style="left:291px;top:175px;width:301px;height:660px;border:1px solid #a9a9a9;border-bottom:2px solid #888;background:#fff"></div>
<div class="a t" style="left:306.3px;top:184.3px;font-size:16px;letter-spacing:-0.637px;">Object Name</div>
<div class="a" style="left:453px;top:178px;width:1px;height:29px;background:#f0f0f0"></div>
<div class="a t" style="left:463px;top:184.3px;font-size:16px;letter-spacing:-0.934px;">Value</div>
<div class="a" style="left:294px;top:228px;width:296px;height:20px;background:#e5e5e5"></div>
<svg class="a" style="left:299px;top:211px;" width="12" height="16" viewBox="0 0 12 16"><path d="M1.5 1.5l9 6.5-9 6.5z" fill="#e4e4e4" stroke="#a8a8a8"/></svg>
<svg class="a" style="left:321px;top:208px;" width="24" height="22" viewBox="0 0 24 22"><path d="M1 1h9.5l3.5 5.5-3.5 5.5H1z" fill="#4f9ae6"/><path d="M1 1h9.5l3.5 5.5-3.5 5.5H1z" fill="none" stroke="#1f6fd0" stroke-width="1"/><path d="M21 1h-4.5L13 6.5l3.5 5.5H21z" fill="#8cc0f2" stroke="#1f6fd0" stroke-width="1"/><path d="M3 9l6-6" stroke="#bfe0fb" stroke-width="1.2"/><circle cx="16.5" cy="14.5" r="6" fill="#4a4a4a"/><circle cx="16.5" cy="14.5" r="6" fill="none" stroke="#9a9a9a" stroke-width="1.6" stroke-dasharray="1.6 1.4"/><circle cx="16.5" cy="14.5" r="3.5" fill="#8a8a8a"/><circle cx="16.5" cy="14.5" r="1.6" fill="#000"/></svg>
<div class="a t" style="left:349.8px;top:210px;font-size:14px;letter-spacing:-0.112px;">w[3:0]</div>
<div class="a t" style="left:458.2px;top:212px;font-size:13px;letter-spacing:1.626px;">0000</div>
<svg class="a" style="left:299px;top:231px;" width="12" height="16" viewBox="0 0 12 16"><path d="M1.5 1.5l9 6.5-9 6.5z" fill="#e4e4e4" stroke="#a8a8a8"/></svg>
<svg class="a" style="left:321px;top:228px;" width="24" height="22" viewBox="0 0 24 22"><path d="M1 1h9.5l3.5 5.5-3.5 5.5H1z" fill="#4f9ae6"/><path d="M1 1h9.5l3.5 5.5-3.5 5.5H1z" fill="none" stroke="#1f6fd0" stroke-width="1"/><path d="M21 1h-4.5L13 6.5l3.5 5.5H21z" fill="#8cc0f2" stroke="#1f6fd0" stroke-width="1"/><path d="M3 9l6-6" stroke="#bfe0fb" stroke-width="1.2"/><circle cx="16.5" cy="14.5" r="6" fill="#4a4a4a"/><circle cx="16.5" cy="14.5" r="6" fill="none" stroke="#9a9a9a" stroke-width="1.6" stroke-dasharray="1.6 1.4"/><circle cx="16.5" cy="14.5" r="3.5" fill="#8a8a8a"/><circle cx="16.5" cy="14.5" r="1.6" fill="#000"/></svg>
<div class="a t" style="left:349.8px;top:230px;font-size:14px;letter-spacing:-0.550px;">y[1:0]</div>
<div class="a t" style="left:458.2px;top:232px;font-size:13px;letter-spacing:1.531px;">00</div>
<svg class="a" style="left:299px;top:816px;" width="10" height="12" viewBox="0 0 10 12"><path d="M7.5 1.5L3 6l4.5 4.5" fill="none" stroke="#555" stroke-width="2.3"/></svg>
<svg class="a" style="left:574px;top:816px;" width="10" height="12" viewBox="0 0 10 12"><path d="M2.5 1.5L7 6l-4.5 4.5" fill="none" stroke="#555" stroke-width="2.3"/></svg>
<div class="a" style="left:316px;top:812px;width:155px;height:18px;background:#cdcdcd"></div>
<div class="a" style="left:386px;top:815px;width:13px;height:12px;background:#ececec"></div>
<div class="a" style="left:598px;top:93px;width:33px;height:712px;background:#f0f0f0;border-left:1px solid #fafafa;border-top:1px solid #fafafa;border-right:1px solid #a8a8a8;border-bottom:1px dashed #a8a8a8"></div>
<div class="a" style="left:594px;top:338px;width:2px;height:240px;background:repeating-linear-gradient(#c8c8c8 0 2px,transparent 2px 4px)"></div>
<div class="a" style="left:288px;top:338px;width:2px;height:240px;background:repeating-linear-gradient(#c8c8c8 0 2px,transparent 2px 4px)"></div>
<svg class="a" style="left:604px;top:99px;" width="20" height="20" viewBox="0 0 20 20"><path d="M2 18l6-6" stroke="#e0822e" stroke-width="3" stroke-linecap="round"/><circle cx="12" cy="7" r="6" fill="#dceaf8" stroke="#6a9bd6" stroke-width="1.5"/><path d="M9 7h6M12 4v6" stroke="#2c5fb0" stroke-width="1.8"/></svg>
<svg class="a" style="left:604px;top:126px;" width="20" height="20" viewBox="0 0 20 20"><path d="M2 18l6-6" stroke="#e0822e" stroke-width="3" stroke-linecap="round"/><circle cx="12" cy="7" r="6" fill="#dceaf8" stroke="#6a9bd6" stroke-width="1.5"/><path d="M9 7h6" stroke="#2c5fb0" stroke-width="1.8"/></svg>
<svg class="a" style="left:604px;top:154px;" width="20" height="20" viewBox="0 0 20 20"><circle cx="10" cy="9" r="8" fill="#fff" stroke="#4f86d4" stroke-width="2.5"/><circle cx="10" cy="9" r="3.5" fill="#fff" stroke="#4f86d4" stroke-width="2"/><path d="M4 4l3 3M16 4l-3 3M4 14l3-3M16 14l-3-3" stroke="#4f86d4" stroke-width="2"/><circle cx="3" cy="17" r="2" fill="#e0822e"/></svg>
<svg class="a" style="left:604px;top:182px;" width="20" height="20" viewBox="0 0 20 20"><path d="M2 18l6-6" stroke="#e0822e" stroke-width="3" stroke-linecap="round"/><circle cx="12" cy="7" r="6" fill="#dceaf8" stroke="#6a9bd6" stroke-width="1.5"/><rect x="8" y="4" width="8" height="4" fill="#e0201b"/></svg>
<div class="a" style="left:603px;top:207px;width:24px;height:1px;background:#a0a0a0"></div>
<div class="a" style="left:603px;top:326px;width:24px;height:1px;background:#a0a0a0"></div>
<div class="a" style="left:603px;top:416px;width:24px;height:1px;background:#a0a0a0"></div>
<svg class="a" style="left:604px;top:216px;" width="21" height="21" viewBox="0 0 21 21"><defs><radialGradient id="ggc" cx=".4" cy=".3" r=".8"><stop offset="0" stop-color="#9be39b"/><stop offset="1" stop-color="#2fa83a"/></radialGradient></defs><circle cx="10.5" cy="10.5" r="9.5" fill="url(#ggc)" stroke="#2a9a34"/><path d="M5.5 10.5h10M9.5 7l-3.5 3.5 3.5 3.5M15.5 6.5v8" fill="none" stroke="#f4fff4" stroke-width="1.3"/></svg>
<svg class="a" style="left:604px;top:244px;" width="21" height="21" viewBox="0 0 21 21"><circle cx="10.5" cy="10.5" r="9.5" fill="url(#ggc)" stroke="#2a9a34"/><path d="M5 10.5h10M11.5 7l3.5 3.5-3.5 3.5M15.5 6.5v8" fill="none" stroke="#f4fff4" stroke-width="1.3"/></svg>
<svg class="a" style="left:604px;top:272px;" width="21" height="19" viewBox="0 0 21 19"><path d="M0.5 7.5H4V15H19" fill="none" stroke="#444" stroke-width="2"/><path d="M5.5 7.5L11 2.5V5.5C15 5.5 18 7 18.5 11C17 9 15 8.8 11 8.8V12.5Z" fill="#1fa82a" stroke="#178a20" stroke-width=".6"/></svg>
<svg class="a" style="left:604px;top:299px;" width="21" height="19" viewBox="0 0 21 19"><path d="M19.5 7.5H16V15H1" fill="none" stroke="#444" stroke-width="2"/><path d="M14.5 7.5L9 2.5V5.5C5 5.5 2 7 1.5 11C3 9 5 8.8 9 8.8V12.5Z" fill="#1fa82a" stroke="#178a20" stroke-width=".6"/></svg>
<svg class="a" style="left:609px;top:334px;" width="12" height="21" viewBox="0 0 12 21"><path d="M4 1h4v5h3l-5 5-5-5h3z" fill="#22a63a"/><rect x="3" y="12" width="6" height="8" fill="#222"/></svg>
<svg class="a" style="left:604px;top:362px;" width="20" height="20" viewBox="0 0 20 20"><rect x="1" y="12" width="3" height="8" fill="#9a9a9a"/><path d="M6 10c1-6 8-7 12-3" fill="none" stroke="#a8a8a8" stroke-width="2.5"/><path d="M9 2L4 7l6 3z" fill="#a8a8a8"/></svg>
<svg class="a" style="left:604px;top:390px;" width="20" height="20" viewBox="0 0 20 20"><rect x="16" y="12" width="3" height="8" fill="#9a9a9a"/><path d="M14 10c-1-6-8-7-12-3" fill="none" stroke="#a8a8a8" stroke-width="2.5"/><path d="M11 2l5 5-6 3z" fill="#a8a8a8"/></svg>
<svg class="a" style="left:604px;top:423px;" width="20" height="22" viewBox="0 0 20 22"><rect x="1" y="1" width="3" height="20" fill="#b5b5b5"/><rect x="16" y="1" width="3" height="20" fill="#b5b5b5"/><path d="M4 4h12M4 10h12M4 16h12" stroke="#cfcfcf"/><path d="M16 7l-6 4 4 1zM4 16l6-4-4-1z" fill="#fff" stroke="#777"/></svg>
<div class="a" style="left:600px;top:448px;width:29px;height:27px;background:#c6e0f7;border:1px solid #a8cdef"></div>
<svg class="a" style="left:604px;top:451px;" width="21" height="22" viewBox="0 0 21 22"><path d="M2 3h4v14h6V3h4v14" fill="none" stroke="#3aa85a" stroke-width="1.8"/><path d="M6 10l6 4-3 1 2 4-2 1-2-4-2 2z" fill="#fff" stroke="#555"/></svg>
<svg class="a" style="left:604px;top:481px;" width="21" height="19" viewBox="0 0 21 19"><rect x="0.5" y="0.5" width="20" height="18" fill="#f8f8f8" stroke="#8a8a8a"/><rect x="0.5" y="0.5" width="20" height="4" fill="#9a9a9a"/><path d="M3 9h15M3 13h15" stroke="#bbb"/><path d="M7 7v9M11 7v9M15 7v9" stroke="#ccc"/></svg>
<div class="a" style="left:631px;top:93px;width:1px;height:690px;background:#bcbcbc"></div>
<div class="a" style="left:632px;top:94px;width:1265px;height:689px;background:#000"></div>
<div class="a" style="left:632px;top:134px;width:187px;height:3px;background:#6e6e6e"></div>
<div class="a" style="left:632px;top:134px;width:187px;height:1px;background:repeating-linear-gradient(90deg,#9a9a9a 0 2px,#5a5a5a 2px 4px)"></div>
<div class="a" style="left:634px;top:138px;width:184px;height:26px;background:#fff"></div>
<div class="a t" style="left:642.5px;top:143px;font-size:15.5px;font-weight:bold;letter-spacing:-0.406px;">Name</div>
<div class="a" style="left:659px;top:164px;width:159px;height:25px;background:#0078d7"></div>
<div class="a" style="left:659px;top:189px;width:159px;height:24px;background:#0078d7"></div>
<div class="a" style="left:686px;top:190px;width:132px;height:23px;border:1px dotted #e8a060"></div>
<div class="a" style="left:632px;top:733px;width:187px;height:2px;background:#6e6e6e"></div>
<div class="a" style="left:819px;top:94px;width:4px;height:689px;background:#ececec;border-left:1px solid #7c7c7c;border-right:1px solid #9a9a9a"></div>
<div class="a" style="left:948px;top:94px;width:4px;height:689px;background:#ececec;border-left:1px solid #7c7c7c;border-right:1px solid #9a9a9a"></div>
<div class="a" style="left:823px;top:134px;width:125px;height:3px;background:#6e6e6e"></div>
<div class="a" style="left:823px;top:134px;width:125px;height:1px;background:repeating-linear-gradient(90deg,#9a9a9a 0 2px,#5a5a5a 2px 4px)"></div>
<div class="a" style="left:825px;top:138px;width:121px;height:26px;background:#fff"></div>
<div class="a t" style="left:835.4px;top:143px;font-size:15.5px;font-weight:bold;letter-spacing:-0.625px;">Value</div>
<div class="a" style="left:825px;top:164px;width:1px;height:50px;background:#d0d0d0"></div>
<div class="a" style="left:823px;top:733px;width:125px;height:2px;background:#6e6e6e"></div>
<svg class="a" style="left:640px;top:169px;" width="12" height="16" viewBox="0 0 12 16"><path d="M1 1l10 7-10 7z" fill="#e0e0e0"/></svg>
<svg class="a" style="left:661px;top:168px;" width="24" height="22" viewBox="0 0 24 22"><g opacity=".55"><path d="M1 1h9.5l3.5 5.5-3.5 5.5H1z" fill="#9ccaf5"/><path d="M21 1h-4.5L13 6.5l3.5 5.5H21z" fill="#9ccaf5"/><path d="M4 10l9-9M11 10l9-9" stroke="#3a7ac8" stroke-width="1.2"/></g><circle cx="16.5" cy="14.5" r="5.5" fill="#4a8ad8" stroke="#3a6ab8" stroke-width="1.4" stroke-dasharray="1.4 1.2"/><circle cx="16.5" cy="14.5" r="3" fill="#5a9ae0"/><circle cx="16.5" cy="14.5" r="1.5" fill="#1a3a80"/></svg>
<div class="a t" style="left:689.8px;top:168.6px;font-size:13.6px;color:#fff;letter-spacing:0.184px;">w[3:0]</div>
<div class="a t" style="left:831px;top:171px;font-size:12.5px;color:#fff;letter-spacing:1.829px;">0000</div>
<svg class="a" style="left:640px;top:194px;" width="12" height="16" viewBox="0 0 12 16"><path d="M1 1l10 7-10 7z" fill="#e0e0e0"/></svg>
<svg class="a" style="left:661px;top:193px;" width="24" height="22" viewBox="0 0 24 22"><g opacity=".55"><path d="M1 1h9.5l3.5 5.5-3.5 5.5H1z" fill="#9ccaf5"/><path d="M21 1h-4.5L13 6.5l3.5 5.5H21z" fill="#9ccaf5"/><path d="M4 10l9-9M11 10l9-9" stroke="#3a7ac8" stroke-width="1.2"/></g><circle cx="16.5" cy="14.5" r="5.5" fill="#4a8ad8" stroke="#3a6ab8" stroke-width="1.4" stroke-dasharray="1.4 1.2"/><circle cx="16.5" cy="14.5" r="3" fill="#5a9ae0"/><circle cx="16.5" cy="14.5" r="1.5" fill="#1a3a80"/></svg>
<div class="a t" style="left:689.4px;top:193.6px;font-size:13.6px;color:#fff;letter-spacing:-0.130px;">y[1:0]</div>
<div class="a t" style="left:831px;top:196px;font-size:12.5px;color:#fff;letter-spacing:1.694px;">00</div>
<svg class="a" style="left:0px;top:0px;pointer-events:none" width="1920" height="1080" viewBox="0 0 1920 1080"><rect x="956" y="164" width="939" height="1" fill="#f4f4f4"/><rect x="956" y="165" width="939" height="1" fill="#404040"/><rect x="962" y="159" width="1" height="5" fill="#f0f0f0"/><rect x="975" y="159" width="1" height="5" fill="#f0f0f0"/><rect x="1000" y="159" width="1" height="5" fill="#f0f0f0"/><rect x="1012" y="159" width="1" height="5" fill="#f0f0f0"/><rect x="1025" y="159" width="1" height="5" fill="#f0f0f0"/><rect x="1037" y="159" width="1" height="5" fill="#f0f0f0"/><rect x="1050" y="154" width="1" height="10" fill="#f0f0f0"/><rect x="1062" y="159" width="1" height="5" fill="#f0f0f0"/><rect x="1075" y="159" width="1" height="5" fill="#f0f0f0"/><rect x="1087" y="159" width="1" height="5" fill="#f0f0f0"/><rect x="1100" y="159" width="1" height="5" fill="#f0f0f0"/><rect x="1125" y="159" width="1" height="5" fill="#f0f0f0"/><rect x="1137" y="159" width="1" height="5" fill="#f0f0f0"/><rect x="1150" y="159" width="1" height="5" fill="#f0f0f0"/><rect x="1162" y="159" width="1" height="5" fill="#f0f0f0"/><rect x="1175" y="154" width="1" height="10" fill="#f0f0f0"/><rect x="1187" y="159" width="1" height="5" fill="#f0f0f0"/><rect x="1200" y="159" width="1" height="5" fill="#f0f0f0"/><rect x="1212" y="159" width="1" height="5" fill="#f0f0f0"/><rect x="1225" y="159" width="1" height="5" fill="#f0f0f0"/><rect x="1250" y="159" width="1" height="5" fill="#f0f0f0"/><rect x="1262" y="159" width="1" height="5" fill="#f0f0f0"/><rect x="1275" y="159" width="1" height="5" fill="#f0f0f0"/><rect x="1287" y="159" width="1" height="5" fill="#f0f0f0"/><rect x="1300" y="154" width="1" height="10" fill="#f0f0f0"/><rect x="1312" y="159" width="1" height="5" fill="#f0f0f0"/><rect x="1325" y="159" width="1" height="5" fill="#f0f0f0"/><rect x="1337" y="159" width="1" height="5" fill="#f0f0f0"/><rect x="1350" y="159" width="1" height="5" fill="#f0f0f0"/><rect x="1375" y="159" width="1" height="5" fill="#f0f0f0"/><rect x="1387" y="159" width="1" height="5" fill="#f0f0f0"/><rect x="1400" y="159" width="1" height="5" fill="#f0f0f0"/><rect x="1412" y="159" width="1" height="5" fill="#f0f0f0"/><rect x="1425" y="154" width="1" height="10" fill="#f0f0f0"/><rect x="1437" y="159" width="1" height="5" fill="#f0f0f0"/><rect x="1450" y="159" width="1" height="5" fill="#f0f0f0"/><rect x="1462" y="159" width="1" height="5" fill="#f0f0f0"/><rect x="1475" y="159" width="1" height="5" fill="#f0f0f0"/><rect x="1500" y="159" width="1" height="5" fill="#f0f0f0"/><rect x="1512" y="159" width="1" height="5" fill="#f0f0f0"/><rect x="1525" y="159" width="1" height="5" fill="#f0f0f0"/><rect x="1537" y="159" width="1" height="5" fill="#f0f0f0"/><rect x="1550" y="154" width="1" height="10" fill="#f0f0f0"/><rect x="1562" y="159" width="1" height="5" fill="#f0f0f0"/><rect x="1575" y="159" width="1" height="5" fill="#f0f0f0"/><rect x="1587" y="159" width="1" height="5" fill="#f0f0f0"/><rect x="1600" y="159" width="1" height="5" fill="#f0f0f0"/><rect x="1625" y="159" width="1" height="5" fill="#f0f0f0"/><rect x="1637" y="159" width="1" height="5" fill="#f0f0f0"/><rect x="1650" y="159" width="1" height="5" fill="#f0f0f0"/><rect x="1662" y="159" width="1" height="5" fill="#f0f0f0"/><rect x="1675" y="154" width="1" height="10" fill="#f0f0f0"/><rect x="1687" y="159" width="1" height="5" fill="#f0f0f0"/><rect x="1700" y="159" width="1" height="5" fill="#f0f0f0"/><rect x="1712" y="159" width="1" height="5" fill="#f0f0f0"/><rect x="1725" y="159" width="1" height="5" fill="#f0f0f0"/><rect x="1750" y="159" width="1" height="5" fill="#f0f0f0"/><rect x="1762" y="159" width="1" height="5" fill="#f0f0f0"/><rect x="1775" y="159" width="1" height="5" fill="#f0f0f0"/><rect x="1787" y="159" width="1" height="5" fill="#f0f0f0"/><rect x="1800" y="154" width="1" height="10" fill="#f0f0f0"/><rect x="1812" y="159" width="1" height="5" fill="#f0f0f0"/><rect x="1825" y="159" width="1" height="5" fill="#f0f0f0"/><rect x="1837" y="159" width="1" height="5" fill="#f0f0f0"/><rect x="1850" y="159" width="1" height="5" fill="#f0f0f0"/><rect x="1875" y="159" width="1" height="5" fill="#f0f0f0"/><rect x="1887" y="159" width="1" height="5" fill="#f0f0f0"/><rect x="987" y="144" width="2" height="20" fill="#e6e6e6"/><rect x="987" y="165" width="2" height="567" fill="#a6a6a6"/><rect x="1112" y="144" width="2" height="20" fill="#e6e6e6"/><rect x="1112" y="165" width="2" height="567" fill="#a6a6a6"/><rect x="1237" y="144" width="2" height="20" fill="#e6e6e6"/><rect x="1237" y="165" width="2" height="567" fill="#a6a6a6"/><rect x="1362" y="144" width="2" height="20" fill="#e6e6e6"/><rect x="1362" y="165" width="2" height="567" fill="#a6a6a6"/><rect x="1487" y="144" width="2" height="20" fill="#e6e6e6"/><rect x="1487" y="165" width="2" height="567" fill="#a6a6a6"/><rect x="1612" y="144" width="2" height="20" fill="#e6e6e6"/><rect x="1612" y="165" width="2" height="567" fill="#a6a6a6"/><rect x="1737" y="144" width="2" height="20" fill="#e6e6e6"/><rect x="1737" y="165" width="2" height="567" fill="#a6a6a6"/><rect x="1862" y="144" width="2" height="20" fill="#e6e6e6"/><rect x="1862" y="165" width="2" height="567" fill="#a6a6a6"/><rect x="956" y="732" width="939" height="1.5" fill="#b0b0b0"/><path d="M956 168.5 H1732 L1736 177.5 L1732 186.5 H956" fill="none" stroke="#00ff00" stroke-width="3"/><path d="M956 193.5 H1732 L1736 202.5 L1732 211.5 H956" fill="none" stroke="#00ff00" stroke-width="3"/></svg>
<div class="a t" style="left:989.8px;top:142.5px;font-size:13.6px;color:#fff;letter-spacing:0.024px;">999,994 ps</div>
<div class="a t" style="left:1114.8px;top:142.5px;font-size:13.6px;color:#fff;letter-spacing:0.024px;">999,995 ps</div>
<div class="a t" style="left:1239.8px;top:142.5px;font-size:13.6px;color:#fff;letter-spacing:0.024px;">999,996 ps</div>
<div class="a t" style="left:1364.8px;top:142.5px;font-size:13.6px;color:#fff;letter-spacing:0.024px;">999,997 ps</div>
<div class="a t" style="left:1489.8px;top:142.5px;font-size:13.6px;color:#fff;letter-spacing:0.024px;">999,998 ps</div>
<div class="a t" style="left:1614.8px;top:142.5px;font-size:13.6px;color:#fff;letter-spacing:0.024px;">999,999 ps</div>
<div class="a t" style="left:1739.8px;top:142.5px;font-size:13.6px;color:#fff;">1,000,000 ps</div>
<div class="a t" style="left:1864.8px;top:142.5px;font-size:13.6px;color:#fff;">1,000</div>
<div class="a" style="left:1897px;top:94px;width:23px;height:689px;background:#f0f0f0"></div>
<div class="a" style="left:1899px;top:94px;width:1px;height:711px;background:#fafafa"></div>
<div class="a t" style="left:1325.5px;top:171px;font-size:13px;color:#fff;letter-spacing:0.359px;">0000</div>
<div class="a t" style="left:1333px;top:196px;font-size:13px;color:#fff;letter-spacing:0.531px;">00</div>
<div class="a" style="left:1736px;top:113px;width:2px;height:620px;background:#ffff00"></div>
<div class="a" style="left:1736px;top:94px;width:87px;height:19px;border:2px solid #e8d800;background:#000"></div>
<div class="a t" style="left:1739.8px;top:96px;font-size:13.6px;color:#ffff20;letter-spacing:0.036px;">1,000,000 ps</div>
<div class="a t" style="left:962.5px;top:759px;font-size:13.8px;color:#fff;letter-spacing:0.011px;">X1: 1,000,000 ps</div>
<svg class="a" style="left:1903px;top:98px;" width="14" height="10" viewBox="0 0 14 10"><path d="M2 8l5-5 5 5" fill="none" stroke="#c8c8c8" stroke-width="2.2"/></svg>
<svg class="a" style="left:1903px;top:790px;" width="14" height="10" viewBox="0 0 14 10"><path d="M2 2l5 5 5-5" fill="none" stroke="#c8c8c8" stroke-width="2.2"/></svg>
<div class="a" style="left:632px;top:783px;width:1265px;height:21px;background:#f0f0f0"></div>
<div class="a" style="left:632px;top:783px;width:1265px;height:1px;background:#fafafa"></div>
<svg class="a" style="left:637px;top:789px;" width="10" height="12" viewBox="0 0 10 12"><path d="M7 1L2.5 5.5L7 10" fill="none" stroke="#c4c4c4" stroke-width="2.2"/></svg>
<svg class="a" style="left:828px;top:789px;" width="10" height="12" viewBox="0 0 10 12"><path d="M7 1L2.5 5.5L7 10" fill="none" stroke="#c4c4c4" stroke-width="2.2"/></svg>
<svg class="a" style="left:805px;top:789px;" width="10" height="12" viewBox="0 0 10 12"><path d="M3 1l4.5 4.5L3 10" fill="none" stroke="#c4c4c4" stroke-width="2.2"/></svg>
<svg class="a" style="left:934px;top:789px;" width="10" height="12" viewBox="0 0 10 12"><path d="M3 1l4.5 4.5L3 10" fill="none" stroke="#c4c4c4" stroke-width="2.2"/></svg>
<svg class="a" style="left:958px;top:788px;" width="10" height="12" viewBox="0 0 10 12"><path d="M7.5 1.5L3 6l4.5 4.5" fill="none" stroke="#555" stroke-width="2.3"/></svg>
<div class="a" style="left:1866px;top:784px;width:10px;height:18px;background:#d4d4d4"></div>
<svg class="a" style="left:1882px;top:788px;" width="10" height="12" viewBox="0 0 10 12"><path d="M2.5 1.5L7 6l-4.5 4.5" fill="none" stroke="#555" stroke-width="2.3"/></svg>
<svg class="a" style="left:0px;top:0px;pointer-events:none" width="1920" height="1080" viewBox="0 0 1920 1080"><g stroke="#e60d0d" fill="#e60d0d" stroke-linecap="round" stroke-linejoin="round"><path d="M1796 142L1863.5 234.5" stroke-width="10" fill="none"/><path d="M1812 139L1783 123.5L1788 156" stroke-width="5.5" fill="none"/><path d="M1783 123.5L1809 137.5L1797 140L1789.5 153Z" stroke-width="3"/></g></svg>
<div class="a" style="left:598px;top:804px;width:661px;height:30px;background:linear-gradient(#ebebeb,#f8f8f8);border-left:1px solid #a8a8a8;border-right:2px solid #909090"></div>
<div class="a" style="left:1257px;top:806px;width:663px;height:2px;background:#b4b4b4"></div>
<div class="a" style="left:598px;top:831px;width:660px;height:3px;background:linear-gradient(#1a80e0,#0a5ab8)"></div>
<div class="a" style="left:632px;top:837px;width:642px;height:2px;background:repeating-linear-gradient(90deg,#c8c8c8 0 2px,#fafafa 2px 3px,transparent 3px 6.25px)"></div>
<svg class="a" style="left:605px;top:809px;" width="21" height="21" viewBox="0 0 21 21"><rect x="0.5" y="0.5" width="19" height="19.5" rx="1.5" fill="#fff" stroke="#4f86d0"/><rect x="0.5" y="0.5" width="19" height="3.5" fill="#1f5fb8"/><path d="M2.5 11h2l1-3h2.5l1 3h2l1-3h2.5l1 3h1.5" fill="none" stroke="#2f6fd0" stroke-width="1.4"/><path d="M2.5 16.5h1.5l1.2-3.5h3l1.2 3.5h2l1.2-3.5h3l1.2 3.5h.7" fill="none" stroke="#2f6fd0" stroke-width="1.4"/></svg>
<div class="a t" style="left:893px;top:815px;font-size:12.6px;letter-spacing:-0.027px;">Default.wcfg</div>
<svg class="a" style="left:1231px;top:811px;" width="19" height="19" viewBox="0 0 19 19"><rect x="1" y="1" width="17" height="17" rx="3.5" fill="#e08a3e" stroke="#c8641e" stroke-width="1.3"/><rect x="3.5" y="3.5" width="11" height="11" fill="none" stroke="#f7c08a" stroke-dasharray="1 1"/><path d="M5.5 5.5l7 7M12.5 5.5l-7 7" stroke="#fff" stroke-width="2"/></svg>
<div class="a" style="left:0px;top:842px;width:1920px;height:1px;background:#c8c8c8"></div>
<div class="a" style="left:0px;top:843px;width:1920px;height:21px;border:1px solid #a9a9a9;background:#f0f0f0"></div>
<div class="a t" style="left:5.5px;top:848px;font-size:12.5px;letter-spacing:-0.229px;">Console</div>
<svg class="a" style="left:1847px;top:848.5px;" width="14" height="8" viewBox="0 0 14 8"><path d="M3 4h8" stroke="#000" stroke-width="1.6"/><path d="M0.5 4L4 0.8v6.4zM13.5 4L10 0.8v6.4z" fill="#000"/></svg>
<svg class="a" style="left:1866px;top:846px;" width="12" height="12" viewBox="0 0 12 12"><rect x="0.8" y="0.8" width="10.4" height="10.4" fill="none" stroke="#000" stroke-width="1.5"/><rect x="0" y="0" width="12" height="2.6" fill="#000"/></svg>
<svg class="a" style="left:1886px;top:846px;" width="12" height="12" viewBox="0 0 12 12"><rect x="0.8" y="4.8" width="6.9" height="6.4" fill="none" stroke="#000" stroke-width="1.5"/><rect x="0" y="4" width="8.5" height="2.4" fill="#000"/><path d="M3.5 4V0.8h7.7v6.9H8" fill="none" stroke="#000" stroke-width="1.5"/><rect x="3" y="0" width="9" height="2.4" fill="#000"/></svg>
<svg class="a" style="left:1905px;top:847px;" width="11" height="11" viewBox="0 0 11 11"><path d="M1 1L10 10M10 1L1 10" stroke="#000" stroke-width="1.9"/></svg>
<div class="a" style="left:0px;top:866px;width:1920px;height:148px;border:1px solid #a0a0a0;border-top:2px solid #a0a0a0;border-bottom:2px solid #8a8a8a;background:#fff"></div>
<div class="a t" style="left:6px;top:869px;font-size:12px;color:#111;letter-spacing:-0.034px;">ISim P.20131013 (signature 0x7708f090)</div>
<div class="a t" style="left:6px;top:885px;font-size:12px;color:#111;letter-spacing:0.336px;">WARNING: A WEBPACK license was found.</div>
<div class="a t" style="left:6px;top:901px;font-size:12px;color:#111;letter-spacing:0.210px;">WARNING: Please use Xilinx License Configuration Manager to check out a full ISim license.</div>
<div class="a t" style="left:6px;top:918px;font-size:12px;color:#111;letter-spacing:0.309px;">WARNING: ISim will run in Lite mode. Please refer to the ISim documentation for more information on the differences between the Lite and the Full version.</div>
<div class="a t" style="left:6px;top:934px;font-size:12px;color:#111;letter-spacing:0.187px;">This is a Lite version of ISim.</div>
<div class="a t" style="left:6px;top:950px;font-size:12px;color:#111;letter-spacing:0.131px;">Time resolution is 1 ps</div>
<div class="a t" style="left:6px;top:967px;font-size:12px;color:#111;letter-spacing:0.202px;">Simulator is doing circuit initialization process.</div>
<div class="a t" style="left:6px;top:983px;font-size:12px;color:#111;letter-spacing:0.151px;">Finished circuit initialization process.</div>
<div class="a t" style="left:6px;top:999px;font-size:12px;font-weight:bold;color:#111;letter-spacing:1.285px;">ISim&gt;</div>
<div class="a" style="left:1898px;top:868px;width:20px;height:144px;background:#f0f0f0"></div>
<svg class="a" style="left:1901px;top:873px;" width="14" height="10" viewBox="0 0 14 10"><path d="M1 8l6-6 6 6" fill="none" stroke="#606060" stroke-width="1.6"/></svg>
<svg class="a" style="left:1901px;top:997px;" width="14" height="10" viewBox="0 0 14 10"><path d="M1 2l6 6 6-6" fill="none" stroke="#606060" stroke-width="1.6"/></svg>
<div class="a" style="left:1899px;top:893px;width:18px;height:95px;background:#cdcdcd"></div>
<div class="a" style="left:1902px;top:934px;width:12px;height:12px;background:#ececec"></div>
<div class="a" style="left:0px;top:1014px;width:1920px;height:64px;background:#f0f0f0"></div>
<div class="a" style="left:1px;top:1014px;width:98px;height:29px;background:#fff;border-right:1px solid #e0e0e0;border-bottom:1px solid #e6e6e6"></div>
<div class="a" style="left:99px;top:1040px;width:552px;height:1px;border-top:1px dotted #c8c8c8"></div>
<div class="a" style="left:241px;top:1016px;width:1px;height:24px;background:#dedede"></div>
<div class="a" style="left:360px;top:1016px;width:1px;height:24px;background:#dedede"></div>
<div class="a" style="left:520px;top:1016px;width:1px;height:24px;background:#dedede"></div>
<svg class="a" style="left:7px;top:1018px;" width="21" height="18" viewBox="0 0 21 18"><rect x="0.5" y="0.5" width="19" height="16" fill="#4a5058" stroke="#8fb4e0" stroke-width="1.2"/><path d="M4 4l3 2-3 2M8 8h4" stroke="#fff" stroke-width="1"/></svg>
<div class="a t" style="left:40.7px;top:1023px;font-size:13px;letter-spacing:-0.367px;">Console</div>
<svg class="a" style="left:105px;top:1017px;" width="20" height="20" viewBox="0 0 20 20"><rect x="0.5" y="0.5" width="18" height="18" fill="#fff" stroke="#3b7bd0"/><rect x="0.5" y="0.5" width="18" height="2" fill="#3b7bd0"/><path d="M3 6h13M3 9h13M3 12h13M3 15h13" stroke="#b8c8dc"/></svg>
<div class="a t" style="left:139px;top:1022px;font-size:13px;letter-spacing:-0.240px;">Compilation Log</div>
<svg class="a" style="left:251px;top:1019px;" width="14" height="14" viewBox="0 0 14 14"><circle cx="7" cy="7" r="6.5" fill="#d40f0f"/><circle cx="5" cy="5" r="2" fill="#f04040"/></svg>
<div class="a t" style="left:283px;top:1022px;font-size:13px;letter-spacing:-0.286px;">Breakpoints</div>
<svg class="a" style="left:368px;top:1016px;" width="20" height="21" viewBox="0 0 20 21"><path d="M0.5 1.5h6l2 2.5h10.5v15H0.5z" fill="#f8e08a" stroke="#e0a040"/><path d="M2 5h15" stroke="#f0c060"/><path d="M7.5 9H10L11.2 13.5H12L13.2 9H15.7L19 14.5V19.5H14.2V16H9V19.5H4.5V14.5Z" fill="#2a2a2a"/><path d="M6 15L8.4 10.5H9.5L10 18.5H6Z" fill="url(#gbn)"/><path d="M13.5 10.5H14.8L17.7 15V18.5H13.4Z" fill="url(#gbn)"/></svg>
<div class="a t" style="left:401.7px;top:1022px;font-size:13px;letter-spacing:-0.487px;">Find in Files Results</div>
<svg class="a" style="left:527px;top:1016px;" width="21" height="21" viewBox="0 0 21 21"><rect x="0.5" y="0.5" width="17" height="17" fill="#fff" stroke="#3b7bd0"/><rect x="0.5" y="0.5" width="17" height="2.5" fill="#3b7bd0"/><path d="M3 6h2M3 10h2M3 14h2" stroke="#3b7bd0"/><path d="M8.5 9.5H10.5L11.3 13.5H12L12.8 9.5H14.8L18 14.5V20H13.5V17H9.8V20H5.3V14.5Z" fill="#2a2a2a"/><path d="M6.8 15L9.1 11H10L10.6 18.8H6.8Z" fill="url(#gbn)"/><path d="M13.3 11H14.2L16.6 15V18.8H13.2Z" fill="url(#gbn)"/></svg>
<div class="a t" style="left:561.5px;top:1022px;font-size:13px;letter-spacing:-0.643px;">Search Results</div>
<div class="a" style="left:1761px;top:1047px;width:157px;height:31px;border-left:2px solid #a8a8a8;border-top:2px solid #a8a8a8;border-right:1px solid #fafafa"></div>
<div class="a t" style="left:1766px;top:1056px;font-size:14px;letter-spacing:0.020px;">Sim Time: 1,000,000 ps</div>
<div class="a" style="left:0px;top:1078px;width:1920px;height:2px;background:#3c3c3c"></div>
<div class="a" style="left:60px;top:1078px;width:360px;height:2px;background:#c8c8c8"></div></body></html>
